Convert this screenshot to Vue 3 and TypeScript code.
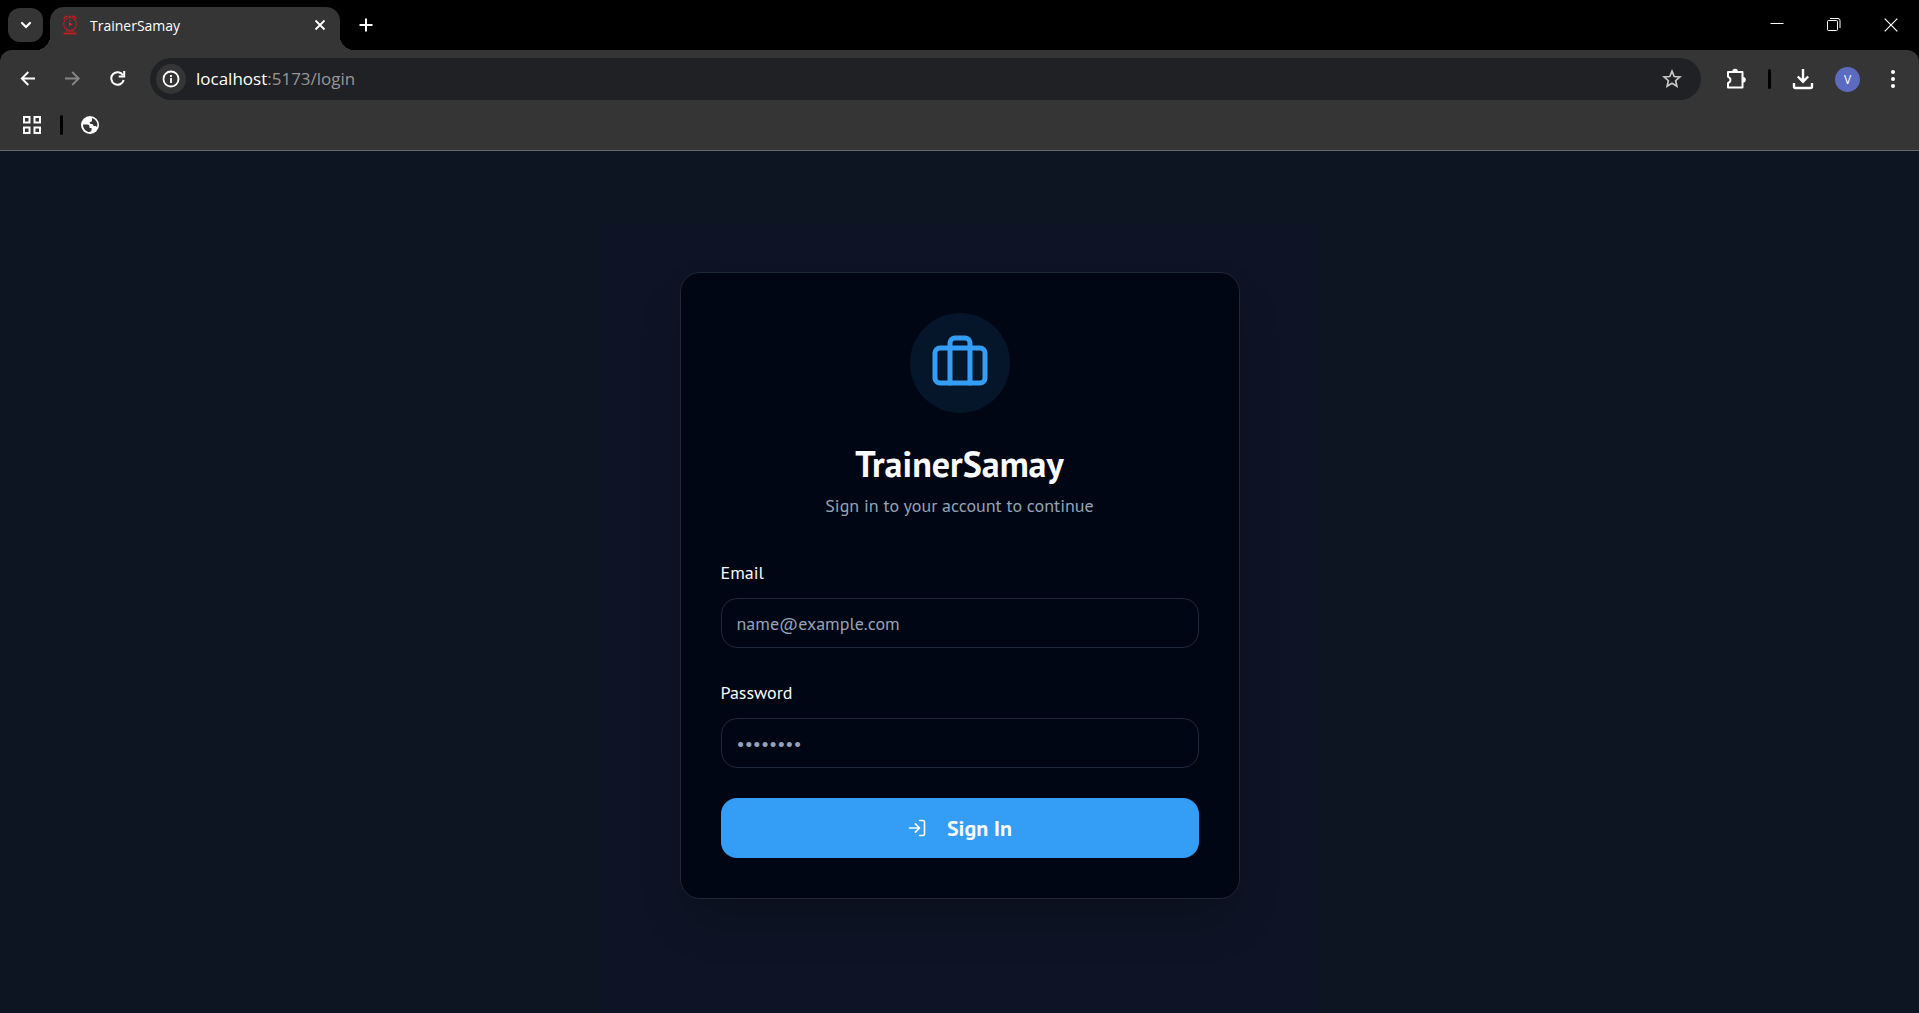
<script setup lang="ts">
import { ref } from 'vue'

const email = ref('')
const password = ref('')
</script>

<template>
  <div class="window">
    <header class="chrome">
      <div class="tabstrip">
        <button class="tab-search" aria-label="Search tabs">
          <svg width="12" height="8" viewBox="0 0 12 8"><path d="M2 2l4 4 4-4" fill="none" stroke="#fff" stroke-width="2.2" stroke-linecap="round" /></svg>
        </button>
        <div class="tab">
          <svg class="favicon" width="16" height="20" viewBox="0 0 16 20" fill="none" stroke="#c41c20">
            <circle cx="8" cy="9" r="6.3" stroke-width="1.2" stroke-dasharray="2.4 .6" />
            <path d="M2 4a2.800 2.800 0 0 1 3.800-2.500M14 4a2.800 2.800 0 0 0-3.800-2.500M7 1.500h2" stroke-width="1.500" />
            <path d="M7 7.200v4l3.500-2z" fill="#e32227" stroke="none" />
            <path d="M8 5v2M3.500 16h9" stroke-width="1" />
            <path d="M1.500 18.500h13" stroke-width="1.800" />
          </svg>
          <span class="tab-title">TrainerSamay</span>
          <button class="icon-btn tab-close" aria-label="Close tab">
            <svg width="12" height="12" viewBox="0 0 12 12"><path d="M1.500 1.500l9 9m0-9l-9 9" stroke="#fff" stroke-width="1.800" /></svg>
          </button>
        </div>
        <button class="icon-btn new-tab" aria-label="New tab">
          <svg width="14" height="14" viewBox="0 0 14 14"><path d="M7 .5v13M.5 7h13" stroke="#fff" stroke-width="2" /></svg>
        </button>
        <div class="window-controls">
          <button class="icon-btn" aria-label="Minimize"><svg width="14" height="14" viewBox="0 0 14 14"><path d="M.5 5.500h13" stroke="#fff" /></svg></button>
          <button class="icon-btn" aria-label="Restore"><svg width="14" height="14" viewBox="0 0 14 14" fill="none" stroke="#fff"><rect x=".5" y="2.500" width="10" height="10" rx="1" /><path d="M3 .5h8a2 2 0 0 1 2 2V10" /></svg></button>
          <button class="icon-btn" aria-label="Close"><svg width="14" height="14" viewBox="0 0 14 14"><path d="M.7.7l12.600 12.600m0-12.600L.7 13.300" stroke="#fff" stroke-width="1.200" /></svg></button>
        </div>
      </div>

      <div class="toolbar">
        <nav class="nav-buttons">
          <button class="icon-btn" aria-label="Back"><svg width="16" height="16" viewBox="0 0 16 16"><path d="M15 7.500H2M8.300 1L1.800 7.500l6.500 6.500" fill="none" stroke="#fff" stroke-width="1.900" /></svg></button>
          <button class="icon-btn" aria-label="Forward"><svg width="16" height="16" viewBox="0 0 16 16"><path d="M0 7.500H13.500M7.200 1l6.500 6.500L7.200 14" fill="none" stroke="#858585" stroke-width="1.900" /></svg></button>
          <button class="icon-btn" aria-label="Reload"><svg width="16" height="16" viewBox="0 0 16 16"><path d="M13 4.200A6.300 6.300 0 1 0 13.700 9" fill="none" stroke="#fff" stroke-width="2" /><path d="M15.200 0v6.500H8.700V4.600h4.500V0z" fill="#fff" /></svg></button>
        </nav>
        <div class="omnibox">
          <button class="icon-btn site-info" aria-label="Site information"><svg width="18" height="18" viewBox="0 0 18 18" fill="none" stroke="#fff" stroke-width="1.800"><circle cx="9" cy="9" r="7.500" /><path d="M9 8v5M9 5v2" /></svg></button>
          <span class="url">localhost<span class="url-path">:5173/login</span></span>
          <button class="icon-btn" aria-label="Bookmark"><svg width="20" height="20" viewBox="0 0 20 20"><path d="M10 2.200l2.200 5.300 5.700.5-4.300 3.700 1.300 5.600L10 14.300l-4.900 3 1.300-5.600L2.100 8l5.700-.5z" fill="none" stroke="#c7c7c7" stroke-width="1.700" /></svg></button>
        </div>
        <div class="actions">
          <button class="icon-btn" aria-label="Extensions"><svg width="22" height="22" viewBox="0 0 22 22"><path d="M3 4h14.500v15.500H3v-4.300l1.500-1a3 3 0 0 0 0-4.400L3 8.600z" fill="none" stroke="#fff" stroke-width="2" stroke-linejoin="round" /><path d="M7.300 3.500a2.800 2.800 0 0 1 5.600 0M18 9a2.800 2.800 0 0 1 0 5.600z" fill="#fff" /></svg></button>
          <span class="divider"></span>
          <button class="icon-btn" aria-label="Downloads"><svg width="22" height="22" viewBox="0 0 22 22" fill="none" stroke="#fff" stroke-width="2.400"><path d="M11 1v12.500M5.800 8.500l5.200 5.200 5.200-5.200M2 15v3.500a1.500 1.500 0 0 0 1.500 1.500h15a1.500 1.500 0 0 0 1.500-1.500V15" /></svg></button>
          <button class="avatar" aria-label="Profile">V</button>
          <button class="icon-btn menu" aria-label="Menu"><svg width="4" height="18" viewBox="0 0 4 18" fill="#fff"><circle cx="2" cy="2" r="2" /><circle cx="2" cy="9" r="2" /><circle cx="2" cy="16" r="2" /></svg></button>
        </div>
      </div>

      <div class="bookmarks">
        <button class="icon-btn" aria-label="All bookmarks"><svg width="20" height="20" viewBox="0 0 20 20" fill="none" stroke="#fff" stroke-width="2"><path d="M2 2h5.500v5.500H2zM12.500 2H18v5.500h-5.500zM2 12.500h5.500V18H2zM12.500 12.500H18V18h-5.500z" /></svg></button>
        <span class="divider"></span>
        <button class="icon-btn" aria-label="Bookmark site"><svg width="18" height="18" viewBox="0 0 18 18"><circle cx="9" cy="9" r="9" fill="#fff" /><path d="M2 8.500h4.500q2 0 2 2v1.500h2v2.500q-1.200 1.700-3 1.500A7.200 7.200 0 0 1 2 8.500zM8 2h3v2.500q-.3 1.700-2.200 1.500Q8.500 8.500 11 8q1.500.2 1.500 2h2.200L16 11a7 7 0 0 0-5-9" fill="#353535" /></svg></button>
      </div>
    </header>

    <main class="page">
      <div class="stage">
        <section class="card">
          <div class="badge">
            <svg width="60" height="60" viewBox="0 0 24 24" fill="none" stroke="#349df5" stroke-width="2" stroke-linecap="round" stroke-linejoin="round"><path d="M16 20V4a2 2 0 0 0-2-2h-4a2 2 0 0 0-2 2v16" /><rect x="2" y="6" width="20" height="14" rx="2" /></svg>
          </div>
          <h1>TrainerSamay</h1>
          <p class="subtitle">Sign in to your account to continue</p>
          <form @submit.prevent>
            <div class="field">
              <label for="email">Email</label>
              <input id="email" v-model="email" type="email" placeholder="name@example.com" />
            </div>
            <div class="field">
              <label for="password">Password</label>
              <input id="password" v-model="password" type="password" placeholder="••••••••" />
            </div>
            <button class="submit" type="submit">
              <svg width="20" height="20" viewBox="0 0 24 24" fill="none" stroke="#f8fafc" stroke-width="2" stroke-linecap="round" stroke-linejoin="round"><path d="M15 3h4a2 2 0 0 1 2 2v14a2 2 0 0 1-2 2h-4M10 17l5-5-5-5M15 12H3" /></svg>
              <span>Sign In</span>
            </button>
          </form>
        </section>
      </div>
    </main>
  </div>
</template>

<style>
body {
  margin: 0;
  background: #0d1422;
}
</style>

<style scoped>
* {
  box-sizing: border-box;
}
.window {
  min-height: 100vh;
  display: flex;
  flex-direction: column;
  font-family: "PT Sans", "Noto Sans", sans-serif;
}
button {
  border: 0;
  padding: 0;
  background: none;
  font-family: inherit;
}
svg {
  display: block;
}
.icon-btn {
  display: flex;
  align-items: center;
  justify-content: center;
}
.chrome {
  background: #000;
  border-bottom: 1px solid #67676b;
  font-family: "Segoe UI", "Open Sans", sans-serif;
}
.tabstrip {
  height: 50px;
  display: flex;
  padding-left: 8px;
}
.tab-search {
  width: 35px;
  height: 34px;
  margin-top: 8px;
  border-radius: 12px;
  background: #353535;
  display: flex;
  align-items: center;
  justify-content: center;
}
.tab {
  position: relative;
  width: 290px;
  height: 43px;
  margin: 7px 0 0 7px;
  padding: 0 14px 7px 12px;
  border-radius: 14px 14px 0 0;
  background: #353535;
  display: flex;
  align-items: center;
}
.tab::before,
.tab::after {
  content: "";
  position: absolute;
  bottom: 0;
  width: 14px;
  height: 14px;
}
.tab::before {
  right: 100%;
  background: radial-gradient(circle at 0 0, transparent 14px, #353535 14px);
}
.tab::after {
  left: 100%;
  background: radial-gradient(circle at 100% 0, transparent 14px, #353535 14px);
}
.tab-title {
  flex: 1;
  margin-left: 12px;
  font-size: 14px;
  color: #fff;
}
.new-tab {
  width: 52px;
}
.window-controls {
  display: flex;
  margin-left: auto;
}
.window-controls .icon-btn {
  width: 57px;
}
.toolbar {
  height: 58px;
  display: flex;
  align-items: center;
  gap: 24px;
  padding: 0 14px 0 20px;
  background: #353535;
  border-radius: 12px 12px 0 0;
}
.nav-buttons {
  display: flex;
  gap: 29px;
}
.omnibox {
  flex: 1;
  height: 42px;
  display: flex;
  align-items: center;
  padding: 0 19px 0 6px;
  border-radius: 21px;
  background: #202124;
}
.site-info {
  width: 30px;
  height: 30px;
  border-radius: 50%;
  background: #353535;
}
.url {
  flex: 1;
  margin-left: 10px;
  font-size: 17px;
  line-height: 24px;
  color: #fff;
}
.url-path {
  color: #96979a;
}
.actions {
  display: flex;
  align-items: center;
  gap: 21px;
}
.menu {
  width: 24px;
}
.divider {
  width: 3px;
  height: 20px;
  border-radius: 2px;
  background: #000;
}
.avatar {
  width: 25px;
  height: 25px;
  border-radius: 50%;
  background: #5c6bc0;
  color: #fff;
  font-size: 12px;
}
.bookmarks {
  height: 42px;
  display: flex;
  align-items: center;
  gap: 18px;
  padding: 0 22px 8px;
  background: #353535;
}
.page {
  flex: 1;
  display: flex;
  justify-content: center;
  padding-top: 72px;
  background: #0d1422;
}
.stage {
  width: 100%;
  max-width: 720px;
  padding: 49px 80px 24px;
  background: #0e1425;
}
.card {
  padding: 40px;
  border: 1px solid #1e2938;
  border-radius: 20px;
  background: #010614;
  box-shadow: 0 25px 50px -12px rgba(0, 0, 0, 0.25);
}
.badge {
  width: 100px;
  height: 100px;
  margin: 0 auto 26px;
  border-radius: 50%;
  background: #06162a;
  display: flex;
  align-items: center;
  justify-content: center;
}
h1 {
  margin: 0;
  font-size: 36px;
  line-height: 50px;
  font-weight: 700;
  text-align: center;
  color: #f8fafc;
}
.subtitle {
  margin: 5px 0 40px;
  font-size: 18px;
  line-height: 24px;
  text-align: center;
  color: #94a3b8;
}
form {
  display: flex;
  flex-direction: column;
  gap: 30px;
}
.field {
  display: flex;
  flex-direction: column;
  gap: 10px;
}
label {
  font-size: 18px;
  line-height: 30px;
  color: #f8fafc;
}
.field input {
  height: 50px;
  padding: 0 15px;
  border: 1px solid #1e293b;
  border-radius: 16px;
  background: transparent;
  font-family: inherit;
  font-size: 18px;
  color: #f8fafc;
}
.field input::placeholder {
  color: #94a3b8;
  opacity: 1;
}
.submit {
  height: 60px;
  border-radius: 16px;
  background: #349df5;
  color: #f8fafc;
  font-size: 22px;
  font-weight: 700;
  display: flex;
  align-items: center;
  justify-content: center;
  gap: 20px;
}
</style>
